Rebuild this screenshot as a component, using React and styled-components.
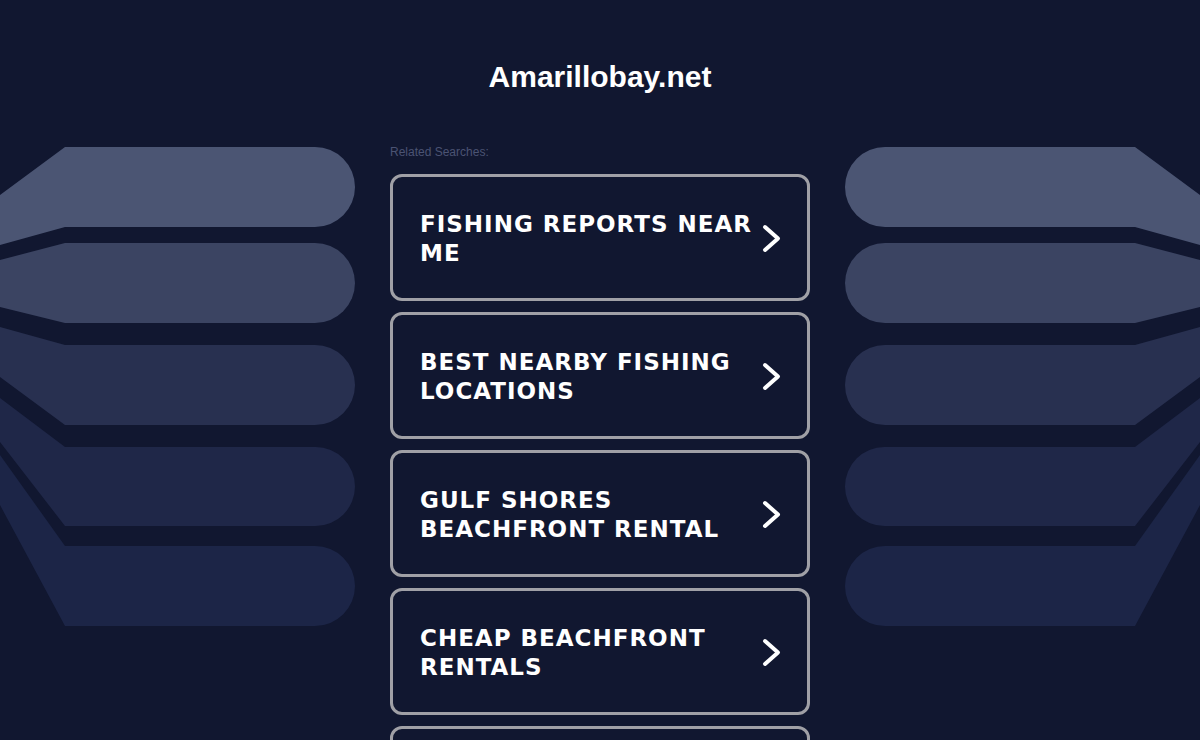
import styled, { createGlobalStyle } from 'styled-components';

const GlobalStyle = createGlobalStyle`
	html, body {
		margin: 0;
		padding: 0;
		background: #111730;
	}
	body {
		font-family: "Liberation Sans", Arial, sans-serif;
		overflow: hidden;
	}
`

const Page = styled.div`
	position: relative;
	width: 1200px; height: 740px;
	overflow: hidden;
	background: #111730;
`
const Backdrop = styled.svg`
	position: absolute; top: 0; left: 0;
	width: 1200px; height: 740px;
	z-index: 0;
`
const Main = styled.main`
	position: relative;
	z-index: 1;
	display: flex;
	flex-direction: column;
	width: 420px;
	margin: 0 auto;
	padding-top: 59px;
`
const Title = styled.h1`
	margin: 0;
	font-size: 30px; line-height: 36px;
	font-weight: 700;
	color: #fff;
	text-align: center;
`
const Label = styled.p`
	margin: 50px 0 15px;
	font-size: 12px; line-height: 14px;
	color: #4b5373;
`
const List = styled.ul`
	display: flex;
	flex-direction: column;
	gap: 11px;
	margin: 0; padding: 0;
	list-style: none;
`
const Card = styled.a`
	box-sizing: border-box;
	display: flex;
	align-items: center;
	justify-content: space-between;
	gap: 4px;
	height: 127px;
	padding: 2px 26px 0 27px;
	background: #111730;
	border: 3px solid #a0a0a6;
	border-radius: 12px;
	color: #fff;
	text-decoration: none;
	cursor: pointer;
`
const CardText = styled.span`
	flex: 1;
	font-family: "DejaVu Sans", Verdana, sans-serif;
	font-size: 23px; line-height: 29px;
	font-weight: 700;
	letter-spacing: 1px;
	text-transform: uppercase;
`
const Chevron = styled.svg`
	flex: none;
	width: 20px; height: 29px;
`

const leftBands = [
	{ t0: 195, t: 147, b: 227, b0: 245, fill: '#4b5573' },
	{ t0: 260, t: 243, b: 323, b0: 307, fill: '#3b4462' },
	{ t0: 327, t: 345, b: 425, b0: 377, fill: '#283050' },
	{ t0: 398, t: 447, b: 526, b0: 442, fill: '#1f2748' },
	{ t0: 455, t: 546, b: 626, b0: 505, fill: '#1c2547' },
]

const bandPath = ({ t0, t, b, b0 }) => {
	const r = (b - t) / 2
	return `M0 ${t0} L65 ${t} L${355 - r} ${t} A${r} ${r} 0 0 1 ${355 - r} ${b} L65 ${b} L0 ${b0} Z`
}

const searches = [
	'Fishing Reports Near Me',
	'Best Nearby Fishing Locations',
	'Gulf Shores Beachfront Rental',
	'Cheap Beachfront Rentals',
	'Fishing Charters Near Me',
]

const App = () => {
	return (
	<Page>
		<GlobalStyle />
		<Backdrop viewBox="0 0 1200 740" aria-hidden="true">
			<g>
				{leftBands.map((band, i) => (
					<path key={i} d={bandPath(band)} fill={band.fill} />
				))}
			</g>
			<g transform="translate(1200 0) scale(-1 1)">
				{leftBands.map((band, i) => (
					<path key={i} d={bandPath(band)} fill={band.fill} />
				))}
			</g>
		</Backdrop>
		<Main>
			<Title>Amarillobay.net</Title>
			<Label>Related Searches:</Label>
			<List>
				{searches.map((item) => (
					<li key={item}>
						<Card>
							<CardText>{item}</CardText>
							<Chevron viewBox="0 0 20 29">
								<polyline points="4,3 17,14.5 4,26" fill="none" stroke="#fff" strokeWidth="4" strokeLinecap="round" strokeLinejoin="round" />
							</Chevron>
						</Card>
					</li>
				))}
			</List>
		</Main>
	</Page>
	)
}

export default App;
